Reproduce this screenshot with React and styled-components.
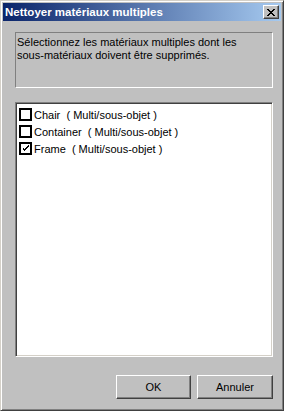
import styled, { createGlobalStyle } from 'styled-components';

const GlobalStyle = createGlobalStyle`
  html, body {
    margin: 0;
    padding: 0;
    background: #c0c0c0;
  }
  body {
    font-family: "Liberation Sans", Arial, sans-serif;
    font-size: 11px;
  }
`;

const Window = styled.div`
  width: 284px;
  height: 411px;
  box-sizing: border-box;
  display: flex;
  flex-direction: column;
  background: #c0c0c0;
  border: 1px solid;
  border-color: #d4d0c8 #404040 #404040 #d4d0c8;
  box-shadow: inset 1px 1px #ffffff, inset -1px -1px #808080;
  padding: 2px;
`;

const TitleBar = styled.div`
  height: 18px;
  display: flex;
  align-items: center;
  justify-content: space-between;
  padding: 0 2px 0 2px;
  background: linear-gradient(to right, #0a246a, #a6caf0);
`;

const Title = styled.span`
  color: #fff;
  font-weight: bold;
  font-size: 11.5px;
`;

const CloseButton = styled.div`
  width: 16px;
  height: 14px;
  box-sizing: border-box;
  background: #c0c0c0;
  border: 1px solid;
  border-color: #ffffff #404040 #404040 #ffffff;
  box-shadow: inset -1px -1px #808080;
  display: flex;
  align-items: center;
  justify-content: center;
`;

const Body = styled.div`
  flex: 1;
  display: flex;
  flex-direction: column;
  padding: 11px 8px 9px 12px;
`;

const InfoBox = styled.div`
  height: 56px;
  box-sizing: border-box;
  border: 1px solid;
  border-color: #808080 #ffffff #ffffff #808080;
  padding: 3px 1px;
  line-height: 13px;
  color: #000;
`;

const ListBox = styled.div`
  flex: 1;
  margin-top: 14px;
  background: #fff;
  border: 1px solid;
  border-color: #808080 #ffffff #ffffff #808080;
  box-shadow: inset 1px 1px #404040, inset -1px -1px #d4d0c8;
  padding: 3px 3px;
`;

const Row = styled.div`
  height: 17px;
  display: flex;
  align-items: center;
  gap: 2px;
  white-space: pre;
`;

const Box = styled.div`
  width: 13px;
  height: 13px;
  box-sizing: border-box;
  border: 2px solid #000;
  background: #fff;
  display: flex;
  align-items: center;
  justify-content: center;
`;

const ButtonRow = styled.div`
  display: flex;
  justify-content: flex-end;
  gap: 6px;
  margin-top: 18px;
`;

const Button = styled.div`
  width: ${p => p.w}px;
  height: 24px;
  box-sizing: border-box;
  border: 1px solid;
  border-color: #ffffff #404040 #404040 #ffffff;
  box-shadow: inset -1px -1px #808080;
  display: flex;
  align-items: center;
  justify-content: center;
  color: #000;
`;

const items = [
  { name: 'Chair', checked: false },
  { name: 'Container', checked: false },
  { name: 'Frame', checked: true },
];

const Check = () => (
  <svg width="7" height="7" viewBox="0 0 7 7" shapeRendering="crispEdges">
    <path d="M0 2h1v3h1v1h1V5h1V4h1V3h1V2h1V0h-1v1h-1v1h-1v1h-1v1H2V3H1V2H0z" fill="#000" />
  </svg>
);

export default function App() {
  return (
    <>
      <GlobalStyle />
      <Window>
        <TitleBar>
          <Title>Nettoyer matériaux multiples</Title>
          <CloseButton>
            <svg width="8" height="7" viewBox="0 0 8 7" shapeRendering="crispEdges">
              <path d="M0 0h2v1h1v1h2V1h1V0h2v1H7v1H6v1H5v1h1v1h1v1h1v1H6V6H5V5H3v1H2v1H0V6h1V5h1V4h1V3H2V2H1V1H0z" fill="#000" />
            </svg>
          </CloseButton>
        </TitleBar>
        <Body>
          <InfoBox>
            Sélectionnez les matériaux multiples dont les<br />
            sous-matériaux doivent être supprimés.
          </InfoBox>
          <ListBox>
            {items.map(it => (
              <Row key={it.name}>
                <Box>{it.checked && <Check />}</Box>
                <span>{it.name}  ( Multi/sous-objet )</span>
              </Row>
            ))}
          </ListBox>
          <ButtonRow>
            <Button w={75}>OK</Button>
            <Button w={76}>Annuler</Button>
          </ButtonRow>
        </Body>
      </Window>
    </>
  );
}
